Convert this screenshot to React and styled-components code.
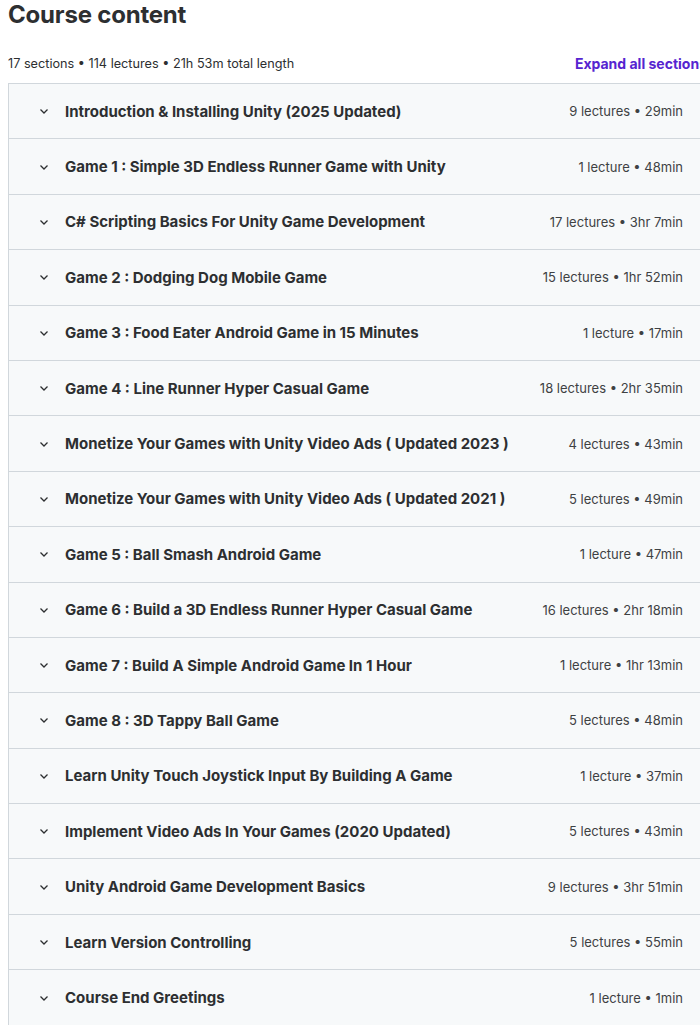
import styled, { createGlobalStyle } from "styled-components";

const GlobalStyle = createGlobalStyle`
  body {
    margin: 0;
    background: #ffffff;
    font-family: Inter, "Noto Sans", "Liberation Sans", sans-serif;
    color: #2d2f31;
    overflow: hidden;
  }
`;

const sections = [
  ["Introduction & Installing Unity (2025 Updated)", "9 lectures • 29min"],
  ["Game 1 : Simple 3D Endless Runner Game with Unity", "1 lecture • 48min"],
  ["C# Scripting Basics For Unity Game Development", "17 lectures • 3hr 7min"],
  ["Game 2 : Dodging Dog Mobile Game", "15 lectures • 1hr 52min"],
  ["Game 3 : Food Eater Android Game in 15 Minutes", "1 lecture • 17min"],
  ["Game 4 : Line Runner Hyper Casual Game", "18 lectures • 2hr 35min"],
  ["Monetize Your Games with Unity Video Ads ( Updated 2023 )", "4 lectures • 43min"],
  ["Monetize Your Games with Unity Video Ads ( Updated 2021 )", "5 lectures • 49min"],
  ["Game 5 : Ball Smash Android Game", "1 lecture • 47min"],
  ["Game 6 : Build a 3D Endless Runner Hyper Casual Game", "16 lectures • 2hr 18min"],
  ["Game 7 : Build A Simple Android Game In 1 Hour", "1 lecture • 1hr 13min"],
  ["Game 8 : 3D Tappy Ball Game", "5 lectures • 48min"],
  ["Learn Unity Touch Joystick Input By Building A Game", "1 lecture • 37min"],
  ["Implement Video Ads In Your Games (2020 Updated)", "5 lectures • 43min"],
  ["Unity Android Game Development Basics", "9 lectures • 3hr 51min"],
  ["Learn Version Controlling", "5 lectures • 55min"],
  ["Course End Greetings", "1 lecture • 1min"],
];

const Page = styled.div`
  width: 699px;
  padding: 0 0 0 8px;
`;

const Heading = styled.h2`
  margin: 0;
  font-size: 24px;
  line-height: 29px;
  font-weight: 700;
  letter-spacing: -0.2px;
`;

const SummaryBar = styled.div`
  display: flex;
  justify-content: space-between;
  align-items: center;
  margin-top: 20px;
  height: 28px;
`;

const Summary = styled.span`
  font-size: 12.7px;
  color: #2d2f31;
`;

const ExpandLink = styled.button`
  border: none;
  background: none;
  padding: 0;
  font-family: inherit;
  font-size: 14px;
  font-weight: 700;
  color: #5624d0;
  white-space: nowrap;
  cursor: pointer;
`;

const Accordion = styled.div`
  margin-top: 6px;
  border: 1px solid #d1d7dc;
  border-right: none;
`;

const Row = styled.div`
  box-sizing: border-box;
  height: 55.4px;
  display: flex;
  align-items: center;
  gap: 16px;
  padding: 0 24px 0 30px;
  background: #f7f9fa;
  border-bottom: 1px solid #d1d7dc;

  &:last-child {
    border-bottom: none;
  }
`;

const Chevron = styled.svg`
  width: 10px;
  height: 10px;
  flex: none;
  color: #2d2f31;
`;

const Title = styled.span`
  flex: 1;
  font-size: 15px;
  font-weight: 700;
  white-space: nowrap;
`;

const Meta = styled.span`
  font-size: 13px;
  color: #3e4143;
  white-space: nowrap;
`;

export default function App() {
  return (
    <Page>
      <GlobalStyle />
      <Heading>Course content</Heading>
      <SummaryBar>
        <Summary>17 sections • 114 lectures • 21h 53m total length</Summary>
        <ExpandLink>Expand all sections</ExpandLink>
      </SummaryBar>
      <Accordion>
        {sections.map(([title, meta]) => (
          <Row key={title}>
            <Chevron viewBox="0 0 10 10">
              <polyline
                points="1.5,3.5 5,7 8.5,3.5"
                fill="none"
                stroke="currentColor"
                strokeWidth="1.3"
              />
            </Chevron>
            <Title>{title}</Title>
            <Meta>{meta}</Meta>
          </Row>
        ))}
      </Accordion>
    </Page>
  );
}
